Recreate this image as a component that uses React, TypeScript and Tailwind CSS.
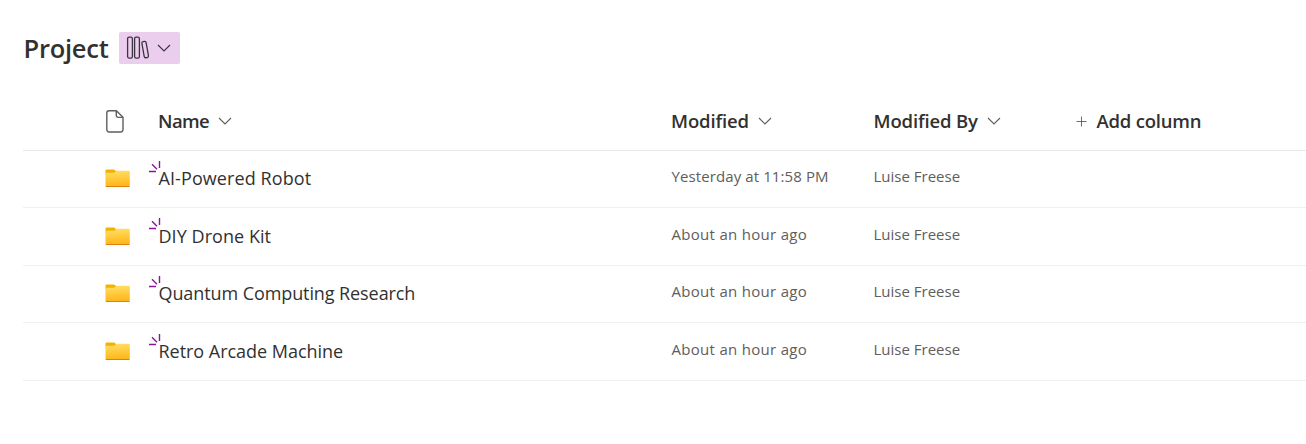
import type { ReactNode } from "react";

function Chevron({ className }: { className: string }) {
  return (
    <svg className={className} width="14" height="8" viewBox="0 0 14 8" fill="none">
      <path d="M1 1l6 6 6-6" stroke="currentColor" strokeWidth="1.1" />
    </svg>
  );
}

function LibraryIcon() {
  return (
    <svg width="24" height="24" viewBox="0 0 24 24" fill="none" stroke="#3b3340" strokeWidth="1.3">
      <rect x="1.6" y="1.1" width="4.8" height="21" rx="1.6" />
      <rect x="8.6" y="1.1" width="4.8" height="21" rx="1.6" />
      <rect x="17" y="5.4" width="4.3" height="16.4" rx="1.6" transform="rotate(-10 19 13.5)" />
    </svg>
  );
}

function FileIcon() {
  return (
    <svg width="18" height="23" viewBox="0 0 18 23" fill="none" stroke="#605e5c" strokeWidth="1.4" strokeLinejoin="round">
      <path d="M3 .8h7.4l6.6 6.5v12.5a2.2 2.2 0 0 1-2.2 2.2H3A2.2 2.2 0 0 1 .8 19.8V3A2.2 2.2 0 0 1 3 .8Z" />
      <path d="M10.3 1v4.6a1.8 1.8 0 0 0 1.8 1.8h4.7" />
    </svg>
  );
}

function FolderIcon() {
  return (
    <svg width="25" height="18" viewBox="0 0 25 18">
      <defs>
        <linearGradient id="folder" x1="0" y1="0" x2="0.1" y2="1">
          <stop offset="0" stopColor="#ffe066" />
          <stop offset="1" stopColor="#ffb61a" />
        </linearGradient>
      </defs>
      <path d="M.5 1.6Q.5.600 1.500.600H8.500Q9.300.600 9.800 1.100L11 2v4H.5Z" fill="#f2b200" />
      <path d="M.5 3.8H8.500Q9.300 3.800 9.900 3.200L11.200 1.800H23.700Q24.800 1.800 24.800 2.900V16.500Q24.800 17.500 23.800 17.500H1.500Q.5 17.500.5 16.500Z" fill="url(#folder)" />
      <path d="M.5 16.900Q.5 17.900 1.600 17.900H23.700Q24.800 17.900 24.800 16.900Z" fill="#dc8010" />
    </svg>
  );
}

function NewMark({ className }: { className: string }) {
  return (
    <svg className={`absolute -left-[9px] ${className}`} width="12" height="12" viewBox="0 0 12 12" stroke="#881798" strokeWidth="1.4" fill="none">
      <path d="M10.5 0v7M3 3.3l5 5M0 10.5h7" />
    </svg>
  );
}

const GRID = "grid grid-cols-[135px_513px_202.5px_202.5px_1fr] border-b";

function Heading({ children, tracking }: { children: ReactNode; tracking: string }) {
  return (
    <div className="flex items-center text-[#323130]">
      <span className={`whitespace-nowrap text-[18.5px] font-semibold leading-6 ${tracking}`}>{children}</span>
      <Chevron className="ml-[9px] text-[#605e5c]" />
    </div>
  );
}

const ROWS = [
  { name: "AI-Powered Robot", modified: "Yesterday at 11:58 PM", height: "h-[57px]", icon: "pt-[18px]", mark: "top-[10px]", nameFit: "tracking-[0.09px]", dateFit: "tracking-[0.1px]" },
  { name: "DIY Drone Kit", modified: "About an hour ago", height: "h-[58px]", icon: "pt-[19px]", mark: "top-[10px]", nameFit: "tracking-[0.05px]", dateFit: "tracking-[0.3px]" },
  { name: "Quantum Computing Research", modified: "About an hour ago", height: "h-[57px]", icon: "pt-[18px]", mark: "top-[10px]", nameFit: "tracking-[-0.09px]", dateFit: "tracking-[0.3px]" },
  { name: "Retro Arcade Machine", modified: "About an hour ago", height: "h-[58px]", icon: "pt-[19px]", mark: "top-[11px]", nameFit: "tracking-[-0.03px]", dateFit: "tracking-[0.3px]" },
];

export default function App() {
  return (
    <main className="h-[444px] w-full overflow-hidden bg-white pl-[23px] pt-8 font-['Open_Sans','Noto_Sans',sans-serif]">
      <header className="flex h-8 items-center">
        <h1 className="w-24 whitespace-nowrap pl-[0.5px] text-[25.5px] font-semibold leading-8 tracking-[-0.25px] text-[#323130]">Project</h1>
        <button className="flex h-8 w-[61px] items-center rounded-[2px] bg-[#ebcdee] pl-[7px] text-[#3b3340]">
          <LibraryIcon />
          <Chevron className="ml-[7px]" />
        </button>
      </header>

      <section className="mt-7">
        <div className={`${GRID} h-[59px] border-[#e8e8e8]`}>
          <div className="flex items-center pl-[83px]"><FileIcon /></div>
          <Heading tracking="tracking-[-0.6px]">Name</Heading>
          <Heading tracking="tracking-[-0.15px]">Modified</Heading>
          <Heading tracking="tracking-[-0.15px]">Modified By</Heading>
          <div className="flex items-center gap-[9.5px] text-[#323130]">
            <svg width="11" height="11" viewBox="0 0 11 11" stroke="#605e5c" strokeWidth="0.9"><path d="M5.5 0.5v10M0.5 5.5h10" /></svg>
            <span className="whitespace-nowrap text-[18.5px] font-semibold leading-6 tracking-[-0.22px]">Add column</span>
          </div>
        </div>
        {ROWS.map((row) => (
          <div key={row.name} className={`${GRID} ${row.height} border-[#f0f0f0]`}>
            <div className={`flex items-start pl-[82px] ${row.icon}`}><FolderIcon /></div>
            <div className="relative flex items-center pb-[2px] pl-[0.5px] text-[#323130]">
              <NewMark className={row.mark} />
              <span className={`whitespace-nowrap text-[18px] leading-6 ${row.nameFit}`}>{row.name}</span>
            </div>
            <div className="flex items-center pb-[6px] pl-[0.5px] text-[#605e5c]">
              <span className={`whitespace-nowrap text-[15px] leading-5 ${row.dateFit}`}>{row.modified}</span>
            </div>
            <div className="flex items-center pb-[6px] text-[#605e5c]">
              <span className="whitespace-nowrap text-[15px] leading-5">Luise Freese</span>
            </div>
          </div>
        ))}
      </section>
    </main>
  );
}
